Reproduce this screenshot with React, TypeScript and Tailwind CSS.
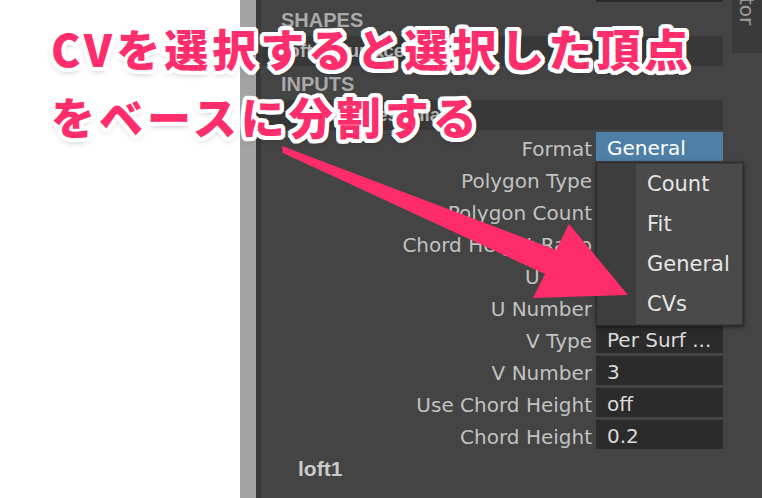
import React from 'react';

const rows: { label: string; value: string; active?: boolean }[] = [
  { label: 'Format', value: 'General', active: true },
  { label: 'Polygon Type', value: '' },
  { label: 'Polygon Count', value: '' },
  { label: 'Chord Height Ratio', value: '' },
  { label: 'U Type', value: '' },
  { label: 'U Number', value: '' },
  { label: 'V Type', value: 'Per Surf ...' },
  { label: 'V Number', value: '3' },
  { label: 'Use Chord Height', value: 'off' },
  { label: 'Chord Height', value: '0.2' },
];

const menu = ['Count', 'Fit', 'General', 'CVs'];

const AttrRow: React.FC<{ label: string; value: string; active?: boolean }> = ({ label, value, active }) => (
  <div className="flex h-[29px] mb-[3px]">
    <div className="w-[331px] text-right pt-[3px] leading-[29px] text-[#c2c2c2] whitespace-nowrap">{label}</div>
    <div
      className={`ml-[4px] w-[127px] h-[29px] pl-[11px] pt-[2px] leading-[29px] whitespace-nowrap overflow-hidden ${
        active ? 'bg-[#4e7fa6] text-white' : 'bg-[#2b2b2b] text-[#dadada]'
      }`}
    >
      {value}
    </div>
  </div>
);

export default function App() {
  return (
    <div className="relative flex w-[762px] h-[498px] overflow-hidden bg-white font-['DejaVu_Sans',sans-serif] text-[20px]">
      <div className="w-[240px] bg-white" />
      <div className="w-[16px] bg-[#a3a3a3]" />
      <div className="w-[5px] bg-[#393939]" />

      <div className="flex flex-1 bg-[#444444]">
        <div className="flex-1 flex flex-col">
          <div className="h-[2px] ml-[335px] w-[127px] bg-[#2b2b2b]" />
          <div className="h-[34px] pl-[20px] pt-[8px] leading-[20px] font-['Liberation_Sans',sans-serif] font-bold text-[20px] text-[#a9a9a9]">
            SHAPES
          </div>
          <div className="h-[30px] ml-[1px] mr-[9px] bg-[#383838] pl-[21px] flex items-center font-['Liberation_Sans',sans-serif] font-bold text-[19px] text-[#b4b4b4]">
            loftedSurface1
          </div>
          <div className="h-[34px] pl-[20px] pt-[8px] leading-[20px] font-['Liberation_Sans',sans-serif] font-bold text-[20px] text-[#a9a9a9]">
            INPUTS
          </div>
          <div className="h-[30px] ml-[1px] mr-[9px] bg-[#383838] pl-[52px] flex items-center font-['Liberation_Sans',sans-serif] font-bold text-[19px] text-[#b4b4b4]">
            nurbsTessellate2
          </div>
          <div className="h-[2px]" />
          {rows.map((r) => (
            <AttrRow key={r.label} {...r} />
          ))}
          <div className="pl-[37px] pt-[6px] leading-[21px] font-['Liberation_Sans',sans-serif] font-bold text-[21px] text-[#cacaca]">
            loft1
          </div>
        </div>

        <div className="w-[30px] flex flex-col">
          <div className="h-[53px] bg-[#3a3a3a] overflow-hidden flex justify-center">
            <span className="[writing-mode:vertical-rl] -mt-[3px] text-[#9c9c9c] text-[20px] leading-[20px]">tor</span>
          </div>
        </div>
      </div>

      {/* dropdown menu */}
      <div className="absolute left-[596px] top-[162px] w-[148px] h-[164px] bg-[#3d3d3d] border border-[#2c2c2c] p-[1px] flex shadow-[0_1px_4px_rgba(0,0,0,0.5)]">
        <div className="w-[38px]" />
        <div className="flex-1 bg-[#4a4a4a] flex flex-col">
          {menu.map((m) => (
            <div key={m} className="h-[40px] pl-[11px] pt-[2px] flex items-center text-[#e6e6e6] text-[21px]">
              {m}
            </div>
          ))}
        </div>
      </div>

      {/* arrow */}
      <svg className="absolute inset-0 pointer-events-none" width="762" height="498" viewBox="0 0 762 498">
        <polygon points="282,146 556,250 569,224 628,295 533,298 545,274 283,153" fill="#fe2c6b" />
      </svg>

      {/* caption */}
      <div className="absolute left-[51px] top-[14px] font-['Noto_Sans_CJK_JP',sans-serif] font-black text-[44px] leading-[68px] tracking-[4px] text-[#fe2d6c] whitespace-nowrap [text-shadow:4px_0_0_#fff,-4px_0_0_#fff,0_4px_0_#fff,0_-4px_0_#fff,3px_3px_0_#fff,-3px_3px_0_#fff,3px_-3px_0_#fff,-3px_-3px_0_#fff,4px_2px_0_#fff,-4px_2px_0_#fff,4px_-2px_0_#fff,-4px_-2px_0_#fff,2px_4px_0_#fff,-2px_4px_0_#fff,2px_-4px_0_#fff,-2px_-4px_0_#fff,0_3px_7px_rgba(0,0,0,0.35)]">
        <div>CVを選択すると選択した頂点</div>
        <div>をベースに分割する</div>
      </div>
    </div>
  );
}
